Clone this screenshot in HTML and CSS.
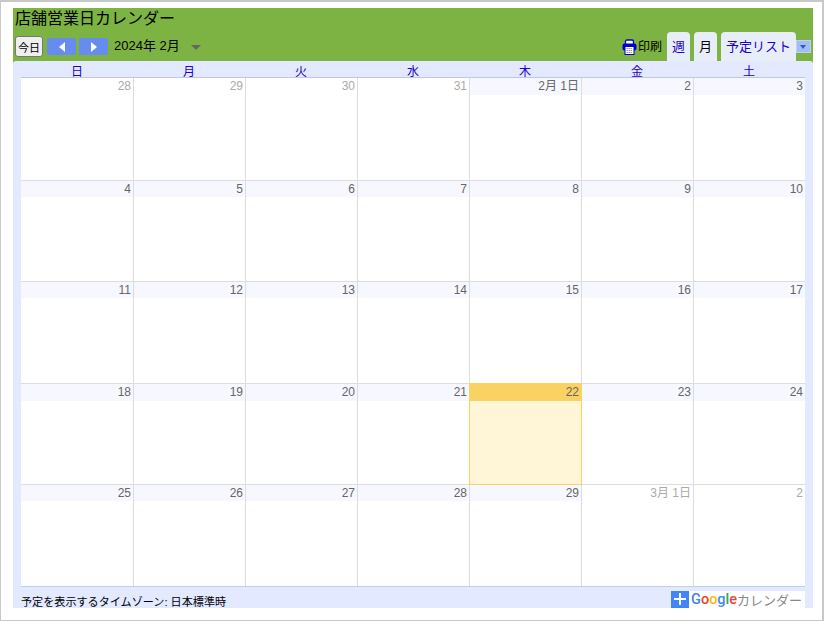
FILE: index.html
```html
<!DOCTYPE html>
<html lang="ja">
<head>
  <meta charset="UTF-8">
  <title>店舗営業日カレンダー</title>
  <link rel="stylesheet" href="styles.css">
</head>
<body>
  <div class="frame">
    <div class="calendar">
      <div class="header">
        <div class="title">店舗営業日カレンダー</div>
        <div class="toolbar">
          <button class="today">今日</button>
          <span class="nav"><span class="arrow-left"></span></span>
          <span class="nav"><span class="arrow-right"></span></span>
          <span class="date-label">2024年 2月</span>
          <span class="date-menu"></span>
          <span class="spacer"></span>
          <span class="print">
            <svg class="print-icon" width="15" height="16" viewBox="0 0 15 16">
              <path d="M3.5 5V2.5q0-1.5 1.5-1.5h5q1.500 0 1.500 1.500V5" fill="#fff" stroke="#00c" stroke-width="1.300"/>
              <rect x="0.500" y="4.500" width="14" height="7" rx="2" fill="#00c"/>
              <rect x="3" y="7.500" width="9" height="8" fill="#fff" stroke="#00c"/>
              <path d="M4.500 9.500h6M4.500 11.500h6M4.500 13.500h6" stroke="#99a" stroke-width="1" stroke-dasharray="1.500 .5"/>
            </svg>印刷
          </span>
          <span class="tab tab-week">週</span>
          <span class="tab tab-month">月</span>
          <span class="tab tab-list">予定リスト</span>
          <span class="tab-menu"></span>
        </div>
      </div>
      <div class="panel">
        <div class="weekdays">
          <div>日</div><div>月</div><div>火</div><div>水</div><div>木</div><div>金</div><div>土</div>
        </div>
        <div class="grid">
          <div class="week first">
            <div class="day other"><div class="num">28</div></div>
            <div class="day other"><div class="num">29</div></div>
            <div class="day other"><div class="num">30</div></div>
            <div class="day other"><div class="num">31</div></div>
            <div class="day"><div class="num">2月 1日</div></div>
            <div class="day"><div class="num">2</div></div>
            <div class="day"><div class="num">3</div></div>
          </div>
          <div class="week short">
            <div class="day"><div class="num">4</div></div>
            <div class="day"><div class="num">5</div></div>
            <div class="day"><div class="num">6</div></div>
            <div class="day"><div class="num">7</div></div>
            <div class="day"><div class="num">8</div></div>
            <div class="day"><div class="num">9</div></div>
            <div class="day"><div class="num">10</div></div>
          </div>
          <div class="week">
            <div class="day"><div class="num">11</div></div>
            <div class="day"><div class="num">12</div></div>
            <div class="day"><div class="num">13</div></div>
            <div class="day"><div class="num">14</div></div>
            <div class="day"><div class="num">15</div></div>
            <div class="day"><div class="num">16</div></div>
            <div class="day"><div class="num">17</div></div>
          </div>
          <div class="week short tall-num">
            <div class="day"><div class="num">18</div></div>
            <div class="day"><div class="num">19</div></div>
            <div class="day"><div class="num">20</div></div>
            <div class="day"><div class="num">21</div></div>
            <div class="day today-cell"><div class="num">22</div></div>
            <div class="day"><div class="num">23</div></div>
            <div class="day"><div class="num">24</div></div>
          </div>
          <div class="week">
            <div class="day"><div class="num">25</div></div>
            <div class="day"><div class="num">26</div></div>
            <div class="day"><div class="num">27</div></div>
            <div class="day"><div class="num">28</div></div>
            <div class="day"><div class="num">29</div></div>
            <div class="day other"><div class="num">3月 1日</div></div>
            <div class="day other"><div class="num">2</div></div>
          </div>
        </div>
        <div class="footer">
          <span class="timezone">予定を表示するタイムゾーン: 日本標準時</span>
          <span class="badge">
            <span class="plus"></span>
            <span class="logo"><b class="g-blue">G</b><b class="g-red">o</b><b class="g-yellow">o</b><b class="g-blue">g</b><b class="g-green">l</b><b class="g-red">e</b></span>
            <span class="badge-text">カレンダー</span>
          </span>
        </div>
      </div>
    </div>
  </div>
</body>
</html>
```

FILE: styles.css
```css
html, body {
  margin: 0;
  height: 100%;
}
body {
  font-family: "Liberation Sans", "Noto Sans CJK JP", sans-serif;
  font-size: 12px;
  background: #fff;
  overflow: hidden;
}
.frame {
  width: 824px;
  height: 621px;
  box-sizing: border-box;
  border: solid #c8c8c8;
  border-width: 2px 2px 1px 1px;
  padding: 6px 0 0 12px;
}
.calendar {
  width: 800px;
  height: 600px;
  overflow: hidden;
  background: #7cb342;
}

/* --- header --- */
.header {
  height: 53px;
  padding: 0 2px;
  box-sizing: border-box;
  color: #000;
}
.title {
  font-size: 16px;
  line-height: 22px;
  height: 24px;
}
.toolbar {
  display: flex;
  align-items: flex-start;
}
.today {
  width: 28px;
  height: 21px;
  padding: 0;
  border: 1px solid #777;
  border-radius: 3px;
  background: #efefef;
  font: 11px "Liberation Sans", "Noto Sans CJK JP", sans-serif;
  color: #000;
  margin-top: 4px;
}
.nav {
  width: 29px;
  height: 17px;
  margin: 6px 0 0 3px;
  background: #668cf0;
  border-radius: 2px;
  display: flex;
  align-items: center;
  justify-content: center;
}
.today + .nav {
  margin-left: 4px;
}
.arrow-left {
  border: 5px solid transparent;
  border-left-width: 0;
  border-right: 6px solid #fff;
}
.arrow-right {
  border: 5px solid transparent;
  border-right-width: 0;
  border-left: 6px solid #fff;
}
.date-label {
  margin: 5px 0 0 6px;
  font-size: 13px;
  line-height: 18px;
}
.date-menu {
  margin: 13px 0 0 11px;
  border: 5px solid transparent;
  border-bottom-width: 0;
  border-top: 5px solid #666;
}
.spacer {
  flex: 1;
}
.print {
  display: flex;
  align-items: center;
  margin: 6px 5px 0 0;
  height: 18px;
  line-height: 18px;
  white-space: nowrap;
}
.print-icon {
  margin-right: 1px;
}
.tab {
  background: #e8eef7;
  border-radius: 4px 4px 0 0;
  height: 29px;
  font-size: 13px;
  line-height: 30px;
  text-align: center;
  color: #20c;
}
.tab-week { width: 23px; }
.tab-month { width: 23px; margin-left: 4px; color: #000; }
.tab-list { width: 75px; margin-left: 4px; }
.tab-menu {
  width: 15px;
  height: 13px;
  margin-top: 8px;
  background: #a4bdf0;
  border: 1px solid #c0d0f4;
  box-sizing: border-box;
  position: relative;
}
.tab-menu::after {
  content: "";
  position: absolute;
  left: 3px;
  top: 4px;
  border: 3.5px solid transparent;
  border-bottom-width: 0;
  border-top: 4px solid #2a5bd0;
}

/* --- grid --- */
.panel {
  background: #e3e9ff;
  height: 547px;
  padding: 0 8px;
  border-radius: 3px 3px 0 0;
}
.weekdays {
  display: grid;
  grid-template-columns: repeat(7, 112px);
  height: 16px;
  line-height: 22px;
  text-align: center;
  color: #20c;
}
.grid {
  background: #fff;
  border-top: 1px solid #bcc8f0;
  border-bottom: 1px solid #bcd0f0;
}
.week {
  display: grid;
  grid-template-columns: repeat(7, 112px);
  height: 102px;
  box-sizing: border-box;
  border-bottom: 1px solid #ddd;
}
.week.first {
  height: 103px;
}
.week.short {
  height: 101px;
}
.week:last-child {
  border-bottom: 0;
  height: 101px;
}
.day {
  border-left: 1px solid #ddd;
  box-sizing: border-box;
}
.day:first-child {
  border-left: 0;
}
.num {
  background: #f7f8ff;
  height: 16px;
  line-height: 16px;
  padding-right: 2px;
  text-align: right;
  color: #666;
}
.week.first .num {
  height: 17px;
}
.tall-num .num {
  height: 17px;
}
.day.other .num {
  background: #fff;
  color: #aaa;
}
.today-cell {
  position: relative;
  background: #fff5d7;
  border: 1px solid #fad163;
  border-top: 0;
  margin: -1px -1px -1px 0;
}
.tall-num .today-cell .num {
  background: #fad163;
  height: 18px;
  line-height: 18px;
  color: #666;
}

/* --- footer --- */
.footer {
  display: flex;
  justify-content: space-between;
  height: 22px;
}
.timezone {
  font-size: 11.1px;
  line-height: 30px;
  white-space: nowrap;
}
.badge {
  display: flex;
  align-items: center;
  height: 17px;
  margin-top: 4px;
  background: #fff;
  width: 134px;
  white-space: nowrap;
}
.plus {
  width: 18px;
  height: 17px;
  background: #4285f4;
  position: relative;
  flex: none;
}
.plus::before, .plus::after {
  content: "";
  position: absolute;
  background: #fff;
}
.plus::before { left: 3px; top: 7px; width: 12px; height: 2px; }
.plus::after { left: 8px; top: 2px; width: 2px; height: 12px; }
.logo {
  font-family: Roboto, sans-serif;
  font-size: 14.5px;
  margin-left: 2px;
}
.logo b { font-weight: 500; }
.g-blue { color: #4285f4; }
.g-red { color: #ea4335; }
.g-yellow { color: #fbbc05; }
.g-green { color: #34a853; }
.badge-text {
  font-size: 13px;
  color: #888;
}
```
